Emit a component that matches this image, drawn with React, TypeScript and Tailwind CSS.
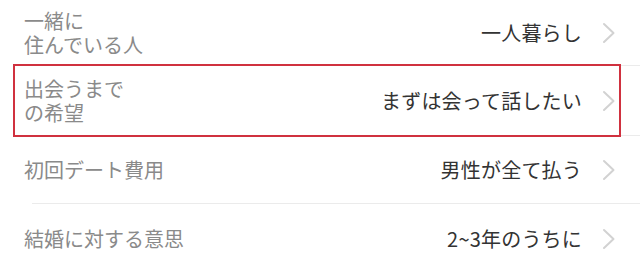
import React from "react";

function Chevron() {
  return (
    <svg width="14" height="22" viewBox="0 0 14 22" className="shrink-0">
      <path d="M2 2 L11.5 11 L2 20" fill="none" stroke="#d2d2d2" strokeWidth="2" strokeLinecap="round" strokeLinejoin="round" />
    </svg>
  );
}

type Row = { label: string; value: string; h: string; highlight?: boolean; sep: boolean };

const rows: Row[] = [
  { label: "一緒に\n住んでいる人", value: "一人暮らし", h: "h-[65px]", sep: true },
  { label: "出会うまで\nの希望", value: "まずは会って話したい", h: "h-[69px]", highlight: true, sep: true },
  { label: "初回デート費用", value: "男性が全て払う", h: "h-[67px]", sep: true },
  { label: "結婚に対する意思", value: "2~3年のうちに", h: "h-[70px]", sep: false },
];

export default function App() {
  return (
    <div
      className="w-[640px] h-[275px] bg-white overflow-hidden"
      style={{ fontFamily: '"Noto Sans CJK JP", "Noto Sans", sans-serif' }}
    >
      {rows.map((r, i) => (
        <div key={i} className="relative">
          <div className={`flex items-center ${r.h} pl-[24px] pr-[24px]`}>
            <div className="flex-1 text-[20px] leading-[24px] text-[#8a8a8a] whitespace-pre-line">{r.label}</div>
            <div className="text-[20px] leading-[26px] text-[#333333] mr-[20px] tracking-[0.2px]">{r.value}</div>
            <Chevron />
          </div>
          {r.sep && <div className="ml-[32px] h-px bg-[#ebebeb]" />}
          {r.highlight && (
            <div className="absolute left-[13px] right-[19px] top-[-2px] bottom-[-1px] border-2 border-[#d0313f] pointer-events-none" />
          )}
        </div>
      ))}
    </div>
  );
}
